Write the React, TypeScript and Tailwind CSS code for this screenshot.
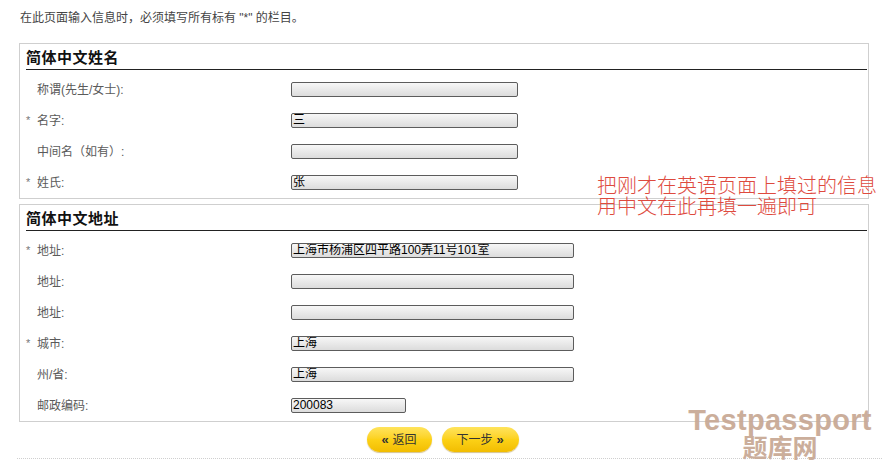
import React from 'react';

const font = { fontFamily: '"Liberation Sans", "Noto Sans CJK SC", sans-serif' };

type Row = { label: string; required?: boolean; value?: string; width: string };

const nameRows: Row[] = [
  { label: '称谓(先生/女士):', width: 'w-[227px]' },
  { label: '名字:', required: true, value: '三', width: 'w-[227px]' },
  { label: '中间名（如有）:', width: 'w-[227px]' },
  { label: '姓氏:', required: true, value: '张', width: 'w-[227px]' },
];

const addressRows: Row[] = [
  { label: '地址:', required: true, value: '上海市杨浦区四平路100弄11号101室', width: 'w-[283px]' },
  { label: '地址:', width: 'w-[283px]' },
  { label: '地址:', width: 'w-[283px]' },
  { label: '城市:', required: true, value: '上海', width: 'w-[283px]' },
  { label: '州/省:', value: '上海', width: 'w-[283px]' },
  { label: '邮政编码:', value: '200083', width: 'w-[115px]' },
];

const FieldRow = ({ row }: { row: Row }) => (
  <div className="flex items-center h-[31px]">
    <div className="w-[271px] flex items-center pl-[6px] text-[12px] text-[#5a5a5a]">
      <span className="w-[11px] text-[#777] text-[11px]">{row.required ? '*' : ''}</span>
      <span>{row.label}</span>
    </div>
    <div
      className={`${row.width} h-[15px] border border-[#5c5c5c] rounded-[2px] bg-gradient-to-b from-[#f7f7f7] to-[#dcdcdc] text-[12px] leading-[13px] text-black pl-[1px] overflow-hidden whitespace-nowrap`}
    >
      {row.value}
    </div>
  </div>
);

const Section = ({ title, rows, className }: { title: string; rows: Row[]; className?: string }) => (
  <div className={`ml-[19px] w-[850px] border border-[#cfcfcf] ${className ?? ''}`}>
    <div className="ml-[6px] mr-[1px] pt-[5px] pb-[2px] border-b border-[#222] text-[15px] leading-[18px] font-bold text-[#111] tracking-[0.5px]">
      {title}
    </div>
    <div className="pt-[4px]">
      {rows.map((r, i) => (
        <FieldRow key={i} row={r} />
      ))}
    </div>
  </div>
);

const YellowButton = ({ children, w }: { children: React.ReactNode; w: string }) => (
  <div
    className={`${w} h-[25px] rounded-full bg-gradient-to-b from-[#ffe45a] via-[#fcd116] to-[#f2bd00] shadow-[0_1px_1px_rgba(160,120,0,0.45)] flex items-center justify-center text-[12px] text-[#333]`}
  >
    {children}
  </div>
);

export default function App() {
  return (
    <div className="relative w-[882px] h-[470px] bg-white overflow-hidden" style={font}>
      <p className="pl-[20px] pt-[10px] text-[12px] leading-[16px] text-[#444]">
        在此页面输入信息时，必须填写所有标有 "*" 的栏目。
      </p>

      <Section title="简体中文姓名" rows={nameRows} className="mt-[17px]" />
      <Section title="简体中文地址" rows={addressRows} className="mt-[5px]" />

      <div className="flex justify-center gap-[10px] mt-[5px] pl-[3px]">
        <YellowButton w="w-[65px]">
          <span className="mr-[4px] text-[13px] font-bold">«</span>返回
        </YellowButton>
        <YellowButton w="w-[77px]">
          下一步<span className="ml-[4px] text-[13px] font-bold">»</span>
        </YellowButton>
      </div>

      <div className="ml-[17px] mt-[6px] border-t border-dotted border-[#cfcfcf]" />

      <div className="absolute left-[597px] top-[176px] text-[20px] leading-[21px] font-light text-[#de4a3e]">
        <div>把刚才在英语页面上填过的信息</div>
        <div>用中文在此再填一遍即可</div>
      </div>

      <div className="absolute left-[684px] top-[403px] w-[192px] flex flex-col items-center text-[#c9aa96] opacity-95">
        <div className="text-[29px] leading-[34px] font-bold tracking-[0.3px]">Testpassport</div>
        <div className="text-[25px] leading-[27px] font-bold -mt-[2px]">题库网</div>
      </div>
    </div>
  );
}
